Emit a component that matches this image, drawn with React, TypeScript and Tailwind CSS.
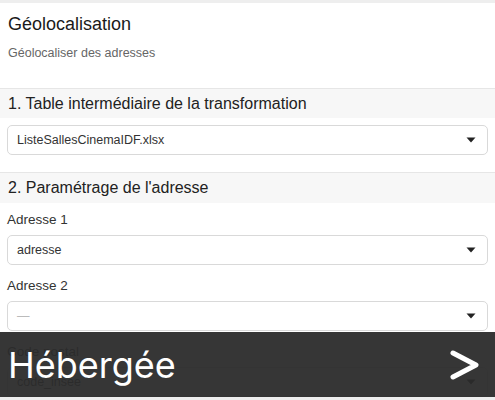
import React from "react";

function Caret() {
  return (
    <svg width="10" height="6" viewBox="0 0 10 6" className="shrink-0">
      <path d="M0.5 0.5h9L5 5.5z" fill="#222" />
    </svg>
  );
}

function SelectBox({ value, muted = false }: { value: string; muted?: boolean }) {
  return (
    <div className="flex h-[30px] items-center justify-between rounded-[5px] border border-[#d9d9d9] bg-white pl-[9px] pr-[11px]">
      <span className={muted ? "text-[12.5px] text-[#bbbbbb]" : "text-[12.5px] text-[#333333]"}>{value}</span>
      <Caret />
    </div>
  );
}

function Field({ label, value, muted }: { label: string; value: string; muted?: boolean }) {
  return (
    <div className="flex flex-col">
      <label className="mb-[7px] text-[13.5px] leading-[16px] text-[#333333]">{label}</label>
      <SelectBox value={value} muted={muted} />
    </div>
  );
}

export default function App() {
  return (
    <div
      className="relative h-[400px] w-[495px] overflow-hidden bg-white text-[#222]"
      style={{ fontFamily: '"Liberation Sans", Arial, sans-serif' }}
    >
      <div className="h-[3px] bg-[#eeeeee]" />

      <div className="h-[85px] px-[8px] pt-[9px]">
        <h1 className="text-[18px] leading-[24px] text-[#1a1a1a]">Géolocalisation</h1>
        <p className="mt-[9px] text-[12.5px] leading-[16px] text-[#666666]">Géolocaliser des adresses</p>
      </div>

      <div className="h-[30px] border-t border-[#e6e6e6] bg-[#f7f7f7] px-[8px] pt-[5px]">
        <h2 className="text-[16px] leading-[20px] text-[#222]">1. Table intermédiaire de la transformation</h2>
      </div>
      <div className="h-[54px] px-[7px] pt-[7px]">
        <SelectBox value="ListeSallesCinemaIDF.xlsx" />
      </div>

      <div className="h-[31px] border-t border-[#e6e6e6] bg-[#f7f7f7] px-[8px] pt-[5px]">
        <h2 className="text-[16px] leading-[20px] text-[#222]">2. Paramétrage de l'adresse</h2>
      </div>
      <div className="flex flex-col gap-[13px] px-[7px] pt-[9px]">
        <Field label="Adresse 1" value="adresse" />
        <Field label="Adresse 2" value="—" muted />
        <Field label="Code postal" value="code_insee" />
      </div>

      <div className="absolute bottom-0 left-0 right-0 h-[3px] bg-[#eeeeee]" />

      <div className="absolute left-0 right-0 top-[332px] flex h-[65px] items-center justify-between bg-[#2b2b2b]/95 pl-[8px] pr-[14px]">
        <span className="text-[36px] leading-none text-white" style={{ fontFamily: "Inter, sans-serif" }}>
          Hébergée
        </span>
        <svg width="32" height="32" viewBox="0 0 32 32">
          <path
            d="M4 4 L27 16 L4 28"
            fill="none"
            stroke="white"
            strokeWidth="5"
            strokeLinecap="round"
            strokeLinejoin="round"
          />
        </svg>
      </div>
    </div>
  );
}
